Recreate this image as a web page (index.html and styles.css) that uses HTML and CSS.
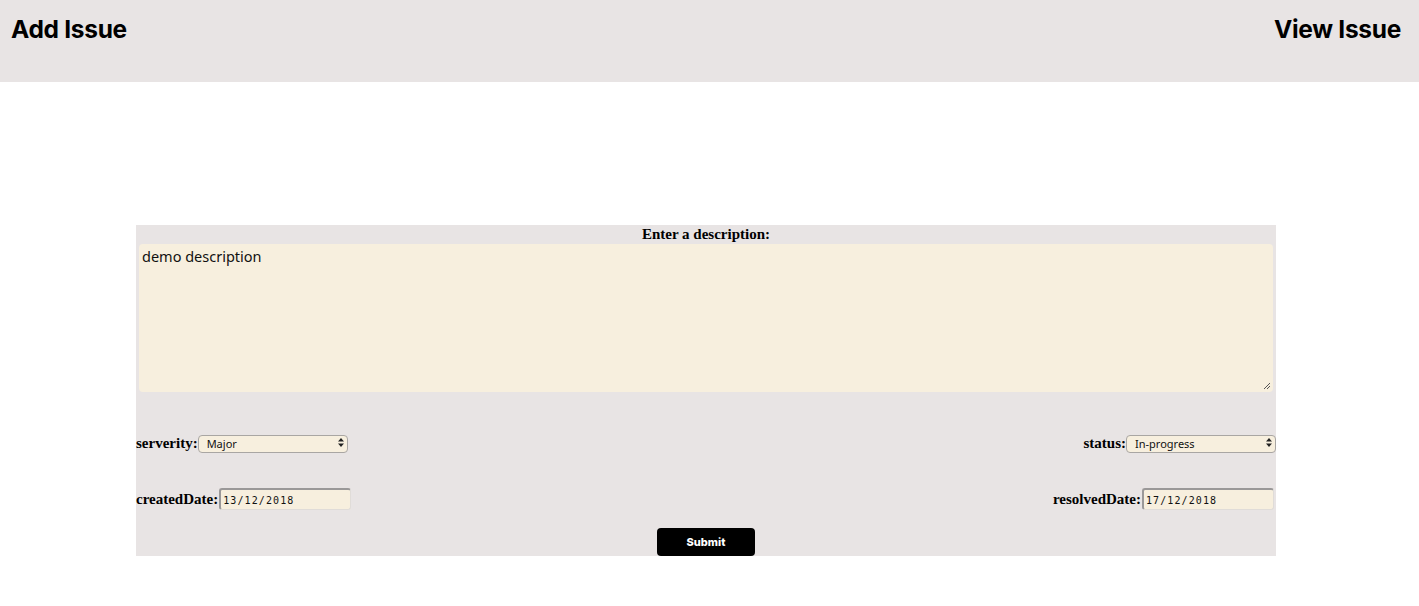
FILE: index.html
```html
<!DOCTYPE html>
<html>
<head>
<meta charset="utf-8">
<link rel="stylesheet" href="styles.css">
</head>
<body>
<header class="topbar">
  <a class="nav-link">Add Issue</a>
  <a class="nav-link">View Issue</a>
</header>
<main class="page">
  <form class="issue-form">
    <label class="desc-label">Enter a description:</label>
    <div class="desc-wrap">
      <textarea class="desc">demo description</textarea>
      <svg class="grip" width="8" height="8" viewBox="0 0 8 8"><path d="M7 1 L1 7 M7 4 L4 7" stroke="#555" stroke-width="1"/></svg>
    </div>
    <div class="row row-select">
      <div class="field">
        <label class="lbl">serverity:</label>
        <div class="select-wrap">
          <select class="sel"><option>Major</option></select>
          <svg class="arrows" width="6" height="9" viewBox="0 0 6 9"><path d="M3 0 L6 3.5 H0 Z M3 9 L6 5.5 H0 Z" fill="#222"/></svg>
        </div>
      </div>
      <div class="field">
        <label class="lbl">status:</label>
        <div class="select-wrap">
          <select class="sel"><option>In-progress</option></select>
          <svg class="arrows" width="6" height="9" viewBox="0 0 6 9"><path d="M3 0 L6 3.5 H0 Z M3 9 L6 5.5 H0 Z" fill="#222"/></svg>
        </div>
      </div>
    </div>
    <div class="row row-date">
      <div class="field">
        <label class="lbl">createdDate:</label>
        <input class="date" type="text" value="13/12/2018">
      </div>
      <div class="field field-right">
        <label class="lbl">resolvedDate:</label>
        <input class="date" type="text" value="17/12/2018">
      </div>
    </div>
    <div class="actions">
      <button class="submit" type="button">Submit</button>
    </div>
  </form>
</main>
</body>
</html>
```
FILE: styles.css
```css
* { box-sizing: border-box; }
body {
  margin: 0;
  font-family: "Liberation Serif", serif;
  background: #fff;
}
.topbar {
  height: 82px;
  background: #e8e4e4;
  display: flex;
  justify-content: space-between;
  align-items: flex-start;
  padding: 14px 18px 0 11px;
}
.nav-link {
  font-family: Inter, "Liberation Sans", sans-serif;
  font-weight: 700;
  font-size: 24.5px;
  letter-spacing: -0.3px;
  color: #000;
  line-height: 30px;
}
.page {
  padding: 143px 143px 0 136px;
}
.issue-form {
  width: 1140px;
  background: #e8e4e4;
  display: flex;
  flex-direction: column;
}
.desc-label {
  text-align: center;
  font-weight: 700;
  font-size: 15px;
  line-height: 19px;
}
.desc-wrap {
  position: relative;
  margin: 0 3px;
}
.desc {
  display: block;
  width: 100%;
  height: 148px;
  background: #f7efde;
  border: none;
  border-radius: 4px;
  resize: none;
  padding: 2px 3px;
  font-family: "Noto Sans", "Liberation Sans", sans-serif;
  font-size: 14.5px;
  color: #111;
  line-height: 20px;
}
.grip {
  position: absolute;
  right: 2px;
  bottom: 2px;
}
.row {
  display: flex;
  justify-content: space-between;
  align-items: center;
}
.row-select { margin-top: 42px; height: 18px; }
.row-date { margin-top: 36px; height: 22px; }
.field {
  display: flex;
  align-items: center;
}
.field-right { padding-right: 2px; }
.lbl {
  font-weight: 700;
  font-size: 15px;
}
.select-wrap {
  position: relative;
  width: 150px;
  height: 18px;
}
.sel {
  appearance: none;
  -webkit-appearance: none;
  width: 100%;
  height: 100%;
  background: #f7efde;
  border: 1px solid #a9a6a3;
  border-radius: 4px;
  font-family: "Noto Sans", "Liberation Sans", sans-serif;
  font-size: 11px;
  color: #111;
  padding: 0 0 0 8px;
  line-height: 16px;
}
.arrows {
  position: absolute;
  right: 4px;
  top: 4px;
}
.date {
  width: 132px;
  height: 22px;
  margin-left: 1px;
  background: #f7efde;
  border: none;
  border-top: 2px solid #9a9898;
  border-left: 2px solid #9a9898;
  border-right: 1px solid #e0dcd8;
  border-bottom: 1px solid #e0dcd8;
  border-radius: 3px;
  font-family: "DejaVu Sans Mono", monospace;
  font-size: 10px;
  letter-spacing: 1.1px;
  color: #111;
  padding: 1px 2px 0;
}
.actions {
  display: flex;
  justify-content: center;
  margin-top: 18px;
}
.submit {
  width: 98px;
  height: 28px;
  background: #000;
  color: #fff;
  border: none;
  border-radius: 4px;
  font-family: Inter, "Liberation Sans", sans-serif;
  font-weight: 800;
  font-size: 11px;
}
```
